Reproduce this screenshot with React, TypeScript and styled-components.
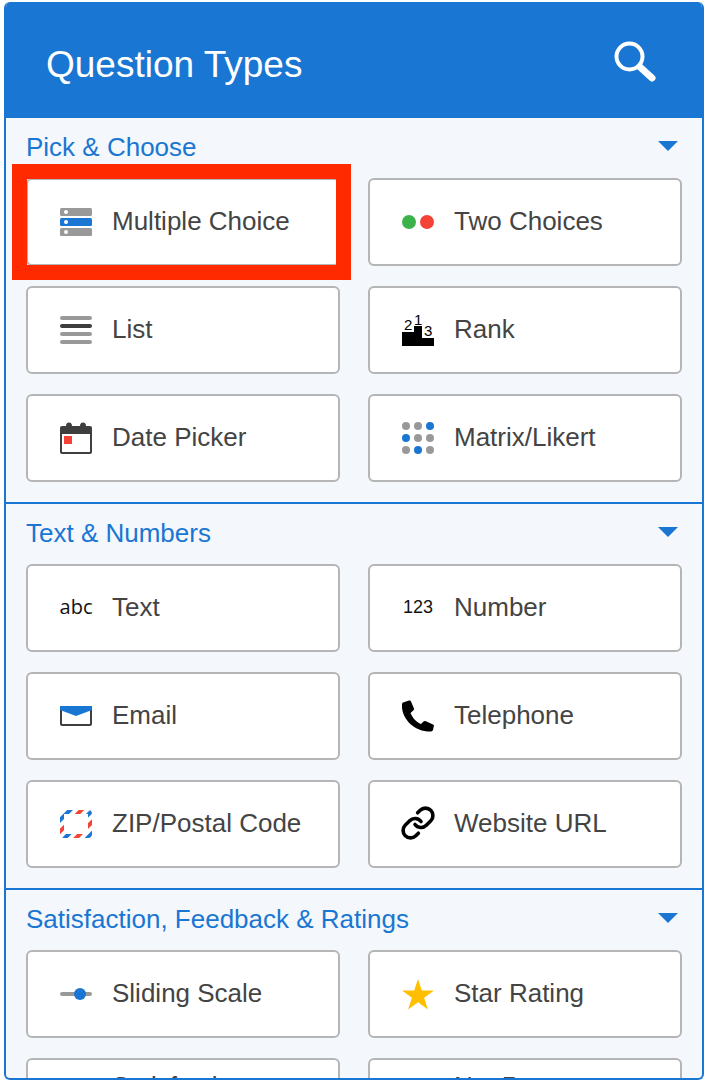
import React from "react";
import styled, { createGlobalStyle } from "styled-components";

const Global = createGlobalStyle`
  html, body { margin: 0; padding: 0; background: #fff; }
  body { font-family: "Liberation Sans", Arial, sans-serif; }
`;

const Panel = styled.main`
  position: relative;
  box-sizing: border-box;
  width: 700px;
  height: 1078px;
  margin: 2px 0 0 4px;
  border: 2px solid #1976d2;
  border-top: 0;
  border-radius: 6px;
  overflow: hidden;
  background: #f4f7fc;
`;

const Header = styled.header`
  box-sizing: border-box;
  height: 116px;
  margin: 0 -2px;
  padding: 0 48px 0 42px;
  display: flex;
  align-items: center;
  justify-content: space-between;
  background: #1976d2;
  color: #fff;
`;

const Title = styled.h1`
  margin: 10px 0 0;
  font-size: 37px;
  font-weight: 400;
`;

const SearchIcon = styled.svg`
  flex: none;
  margin-top: 3px;
`;

const Section = styled.section`
  padding: 0 20px 20px;
  & + & { border-top: 2px solid #1976d2; }
`;

const SectionHead = styled.div`
  box-sizing: border-box;
  height: 60px;
  display: flex;
  align-items: center;
  justify-content: space-between;
  padding: 0 4px 2px 0;
  color: #1976d2;
  font-size: 26px;
`;

const Caret = styled.span`
  width: 0;
  height: 0;
  border-left: 10px solid transparent;
  border-right: 10px solid transparent;
  border-top: 10px solid #1976d2;
  margin-top: -2px;
`;

const Grid = styled.div`
  display: grid;
  grid-template-columns: 314px 314px;
  column-gap: 28px;
  row-gap: 20px;
`;

const Card = styled.div`
  box-sizing: border-box;
  height: 88px;
  padding: 0 0 2px 32px;
  display: flex;
  align-items: center;
  gap: 20px;
  background: #fff;
  border: 2px solid #b5b5b5;
  border-radius: 6px;
  color: #444;
  font-size: 26px;
  line-height: 30px;
  white-space: pre-line;
`;

const IconSlot = styled.span`
  flex: none;
  width: 32px;
  height: 34px;
  display: flex;
  align-items: center;
  justify-content: center;
`;

const Glyph = styled.span<{ $mono?: boolean }>`
  color: #111;
  font-family: ${(p) => (p.$mono ? '"Liberation Sans"' : '"Open Sans"')}, sans-serif;
  font-size: ${(p) => (p.$mono ? "18px" : "20px")};
`;

const LinkIcon = styled.svg`
  flex: none;
`;

const Highlight = styled.div`
  position: absolute;
  left: 6px;
  top: 162px;
  width: 339px;
  height: 116px;
  box-sizing: border-box;
  border: 15px solid #ff2a00;
  pointer-events: none;
`;

const B = "#1976d2", G = "#999", D = "#3e3e3e", R = "#f44336";

const Svg: React.FC<{ children: React.ReactNode }> = ({ children }) => (
  <svg width="32" height="34" viewBox="0 0 32 34" aria-hidden="true">{children}</svg>
);

const icons: Record<string, React.ReactNode> = {
  mc: <Svg>
    {[4, 14, 24].map((y, i) => <g key={y}>
      <rect x="0" y={y} width="32" height="8" rx="1.5" fill={i === 1 ? B : G} />
      <circle cx="6" cy={y + 4} r="2" fill="#fff" />
    </g>)}
  </Svg>,
  two: <Svg>
    <circle cx="7" cy="18" r="7" fill="#3cb34a" />
    <circle cx="25" cy="18" r="7" fill={R} />
  </Svg>,
  list: <Svg>
    {[4, 12, 20, 28].map((y, i) => <rect key={y} x="0" y={y} width="32" height="4" rx="2" fill={i === 1 ? D : G} />)}
  </Svg>,
  rank: <Svg>
    <path d="M0 20h12v-6h8v12h12v8H0z" fill="#000" />
    <text x="2" y="18" fontFamily="Liberation Sans" fontSize="15" fill="#000">2</text>
    <text x="12" y="13" fontFamily="Liberation Sans" fontSize="15" fill="#000">1</text>
    <text x="22" y="24" fontFamily="Liberation Sans" fontSize="15" fill="#000">3</text>
  </Svg>,
  date: <Svg>
    <path d="M2 6h4a3 3.500 0 0 1 6 0h8a3 3.500 0 0 1 6 0h4a2 2 0 0 1 2 2v24a2 2 0 0 1-2 2H2a2 2 0 0 1-2-2V8a2 2 0 0 1 2-2z" fill={D} />
    <rect x="2" y="14" width="28" height="18" fill="#fff" />
    <rect x="4" y="16" width="8" height="8" fill={R} />
  </Svg>,
  matrix: <Svg>
    {[[G, G, B], [B, G, G], [G, B, G]].map((row, r) => row.map((c, i) =>
      <circle key={`${r}${i}`} cx={4 + i * 12} cy={6 + r * 12} r="4" fill={c} />))}
  </Svg>,
  abc: <Glyph>abc</Glyph>,
  num: <Glyph $mono>123</Glyph>,
  email: <Svg>
    <rect x="1" y="9" width="30" height="18" rx="1" fill="#fff" stroke={D} strokeWidth="2" />
    <path d="M0 8h32v4l-16 6-16-6z" fill={B} />
  </Svg>,
  tel: <Svg>
    <path d="M1 4.500 7 2.500q1.500-.3 2 1L12 10.500q.4 1-.5 1.700L8.500 15C10.500 20 14.500 24 19 26l2.500-2.500q.8-.8 1.800-.4L31 26.500q1 .4.900 1.500L31 32q-.3 1.400-2 1.500C12 34-1 20 0 6.500q0-1.500 1-2z" fill="#000" />
  </Svg>,
  zip: <Svg>
    <defs>
      <pattern id="air" width="16" height="16" patternUnits="userSpaceOnUse" patternTransform="rotate(45)">
        <rect width="4" height="16" fill={R} />
        <rect x="4" width="4" height="16" fill="#fff" />
        <rect x="8" width="4" height="16" fill={B} />
        <rect x="12" width="4" height="16" fill="#fff" />
      </pattern>
    </defs>
    <rect x="2" y="6" width="28" height="24" rx="2" fill="none" stroke="url(#air)" strokeWidth="4" />
  </Svg>,
  link: <LinkIcon width="36" height="36" viewBox="0 0 24 24" fill="none" stroke="#000" strokeWidth="2.4" strokeLinecap="round" aria-hidden="true">
    <path d="M10 13a5 5 0 0 0 7.540.540l3-3a5 5 0 0 0-7.070-7.070l-1.720 1.710" />
    <path d="M14 11a5 5 0 0 0-7.540-.540l-3 3a5 5 0 0 0 7.070 7.070l1.710-1.710" />
  </LinkIcon>,
  slide: <Svg>
    <rect x="0" y="16" width="32" height="4" rx="2" fill={G} />
    <circle cx="20" cy="18" r="6" fill={B} />
  </Svg>,
  star: <Svg>
    <path d="M16 3l3.800 11.600H32l-9.900 7.200 3.800 11.700L16 26.300 6.100 33.500l3.800-11.700L0 14.600h12.200z" fill="#ffbf00" />
  </Svg>,
};

const sections = [
  { title: "Pick & Choose", items: [["mc", "Multiple Choice"], ["two", "Two Choices"], ["list", "List"], ["rank", "Rank"], ["date", "Date Picker"], ["matrix", "Matrix/Likert"]] },
  { title: "Text & Numbers", items: [["abc", "Text"], ["num", "Number"], ["email", "Email"], ["tel", "Telephone"], ["zip", "ZIP/Postal Code"], ["link", "Website URL"]] },
  { title: "Satisfaction, Feedback & Ratings", items: [["slide", "Sliding Scale"], ["star", "Star Rating"], ["", "Satisfaction\nSurvey"], ["", "Net Promoter\nScore"]] },
];

export default function App() {
  return (
    <>
      <Global />
      <Panel>
        <Header>
          <Title>Question Types</Title>
          <SearchIcon width="42" height="42" viewBox="0 0 42 42" fill="none" stroke="#fff" aria-hidden="true">
            <circle cx="15.500" cy="15.500" r="13" strokeWidth="4" />
            <path d="M26 26l12 11" strokeWidth="7" strokeLinecap="round" />
          </SearchIcon>
        </Header>
        {sections.map((s) => (
          <Section key={s.title}>
            <SectionHead>
              <span>{s.title}</span>
              <Caret />
            </SectionHead>
            <Grid>
              {s.items.map(([icon, label]) => (
                <Card key={label}>
                  <IconSlot>{icons[icon]}</IconSlot>
                  {label}
                </Card>
              ))}
            </Grid>
          </Section>
        ))}
        <Highlight />
      </Panel>
    </>
  );
}
